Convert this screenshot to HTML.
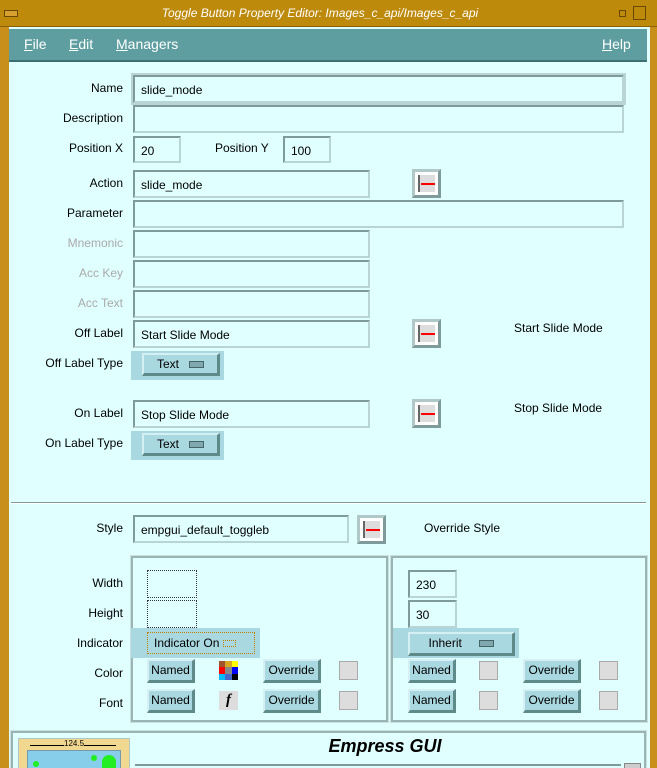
<!DOCTYPE html>
<html style="overflow:hidden;height:768px"><head><style>
body{margin:0;width:657px;height:768px;overflow:hidden;background:#c8901a;font-family:"Liberation Sans",sans-serif;font-size:12px;color:#000;position:relative}
.a{position:absolute}
.in{position:absolute;box-sizing:border-box;border-top:2px solid #7f9a9a;border-left:2px solid #7f9a9a;border-bottom:2px solid #b8d4d4;border-right:2px solid #b8d4d4;background:#e0ffff;padding:6px 0 0 6px;font-size:12px}
.lb{position:absolute;text-align:right;width:120px;left:3px;font-size:12px}
.dim{color:#aaa}
.btn{position:absolute;box-sizing:border-box;background:#a9d8e0;border-top:2px solid #d4f0f4;border-left:2px solid #d4f0f4;border-bottom:3px solid #5f8a8a;border-right:3px solid #5f8a8a;text-align:center;font-size:12px;line-height:18px}
.hl{position:absolute;background:#a9d8e0}
.ic{position:absolute;width:29px;height:29px;box-sizing:border-box;border:3px solid #b0c8c8;border-right-color:#7f9a9a;border-bottom-color:#7f9a9a;background:#fff}
.ic i{position:absolute;left:3px;top:3px;width:17px;height:17px;background:#ddd;border-left:2px solid #666;box-sizing:border-box}
.ic i b{position:absolute;left:1px;top:8px;width:14px;height:2px;background:red}
.gr{position:absolute;width:19px;height:19px;background:#ddd;border:1px solid #aaa;box-sizing:border-box}
.box{position:absolute;box-sizing:border-box;border:2px solid #9ab4b4;outline:1px solid #c8e0e0}
.dot{position:absolute;border:1px dotted #334;box-sizing:border-box}
</style></head><body>
<div class="a" style="left:0;top:0;width:657px;height:26px;background:#bd8a0c;border-bottom:1px solid #8a6000"></div>
<div class="a" style="left:4px;top:10px;width:12px;height:5px;border:1px solid #6a4800;background:#d8a030"></div>
<div class="a" style="left:619px;top:10px;width:5px;height:5px;border:1px solid #6a4800"></div>
<div class="a" style="left:633px;top:6px;width:11px;height:12px;border:1px solid #6a4800"></div>
<div class="a" style="left:20px;top:0;width:600px;text-align:center;color:#fff;font-style:italic;font-size:12px;line-height:27px">Toggle Button Property Editor: Images_c_api/Images_c_api</div>
<div class="a" style="left:9px;top:27px;width:641px;height:741px;background:#e0ffff"></div>
<div class="a" style="left:9px;top:29px;width:638px;height:31px;background:#5f9ea0;border-bottom:2px solid #3d6e70;color:#fff;font-size:14px"></div>
<div class="a" style="left:24px;top:36px;color:#fff;font-size:14px"><u>F</u>ile</div>
<div class="a" style="left:69px;top:36px;color:#fff;font-size:14px"><u>E</u>dit</div>
<div class="a" style="left:116px;top:36px;color:#fff;font-size:14px"><u>M</u>anagers</div>
<div class="a" style="left:602px;top:36px;color:#fff;font-size:14px"><u>H</u>elp</div>

<div class="lb" style="top:81px">Name</div>
<div class="a" style="left:131px;top:73px;width:495px;height:32px;background:#b8d4d4"></div>
<div class="in" style="left:133px;top:75px;width:491px;height:28px">slide_mode</div>
<div class="lb" style="top:111px">Description</div>
<div class="in" style="left:133px;top:105px;width:491px;height:28px"></div>
<div class="lb" style="top:141px">Position X</div>
<div class="in" style="left:133px;top:136px;width:48px;height:27px">20</div>
<div class="a" style="left:215px;top:141px">Position Y</div>
<div class="in" style="left:283px;top:136px;width:48px;height:27px">100</div>
<div class="lb" style="top:176px">Action</div>
<div class="in" style="left:133px;top:170px;width:237px;height:28px">slide_mode</div>
<div class="ic" style="left:412px;top:169px"><i><b></b></i></div>
<div class="lb" style="top:206px">Parameter</div>
<div class="in" style="left:133px;top:200px;width:491px;height:28px"></div>
<div class="lb dim" style="top:236px">Mnemonic</div>
<div class="in" style="left:133px;top:230px;width:237px;height:28px"></div>
<div class="lb dim" style="top:266px">Acc Key</div>
<div class="in" style="left:133px;top:260px;width:237px;height:28px"></div>
<div class="lb dim" style="top:296px">Acc Text</div>
<div class="in" style="left:133px;top:290px;width:237px;height:28px"></div>
<div class="lb" style="top:326px">Off Label</div>
<div class="in" style="left:133px;top:320px;width:237px;height:28px">Start Slide Mode</div>
<div class="ic" style="left:412px;top:319px"><i><b></b></i></div>
<div class="a" style="left:514px;top:321px">Start Slide Mode</div>
<div class="lb" style="top:356px">Off Label Type</div>
<div class="hl" style="left:131px;top:351px;width:93px;height:29px"></div>
<div class="btn" style="left:142px;top:353px;width:78px;height:23px">Text &nbsp;&nbsp;<span style="display:inline-block;width:13px;height:5px;background:#7fa8b0;border:1px solid #466"></span></div>
<div class="lb" style="top:406px">On Label</div>
<div class="in" style="left:133px;top:400px;width:237px;height:28px">Stop Slide Mode</div>
<div class="ic" style="left:412px;top:399px"><i><b></b></i></div>
<div class="a" style="left:514px;top:401px">Stop Slide Mode</div>
<div class="lb" style="top:436px">On Label Type</div>
<div class="hl" style="left:131px;top:431px;width:93px;height:29px"></div>
<div class="btn" style="left:142px;top:433px;width:78px;height:23px">Text &nbsp;&nbsp;<span style="display:inline-block;width:13px;height:5px;background:#7fa8b0;border:1px solid #466"></span></div>

<div class="a" style="left:11px;top:502px;width:635px;height:1px;background:#7f9a9a;border-bottom:1px solid #fff"></div>
<div class="lb" style="top:521px">Style</div>
<div class="in" style="left:133px;top:515px;width:216px;height:28px">empgui_default_toggleb</div>
<div class="ic" style="left:357px;top:515px"><i><b></b></i></div>
<div class="a" style="left:424px;top:521px">Override Style</div>

<div class="box" style="left:131px;top:556px;width:257px;height:166px"></div>
<div class="box" style="left:391px;top:556px;width:256px;height:166px"></div>
<div class="lb" style="top:576px">Width</div>
<div class="dot" style="left:147px;top:570px;width:50px;height:28px"></div>
<div class="lb" style="top:606px">Height</div>
<div class="dot" style="left:147px;top:600px;width:50px;height:28px"></div>
<div class="lb" style="top:636px">Indicator</div>
<div class="hl" style="left:131px;top:628px;width:129px;height:30px"></div>
<div class="a" style="left:147px;top:632px;width:108px;height:22px;border:1px dotted #c08000;box-sizing:border-box;padding:3px 0 0 6px">Indicator On <span style="display:inline-block;width:11px;height:5px;border:1px dotted #c08000"></span></div>
<div class="lb" style="top:666px">Color</div>
<div class="btn" style="left:147px;top:659px;width:48px;height:24px">Named</div>
<div class="a" style="left:219px;top:661px;width:19px;height:19px;display:grid;grid-template-columns:1fr 1fr 1fr">
<i style="background:#a0522d"></i><i style="background:#daa520"></i><i style="background:#ff0"></i><i style="background:red"></i><i style="background:#888"></i><i style="background:#00f"></i><i style="background:#0bf"></i><i style="background:#46c"></i><i style="background:#000"></i></div>
<div class="btn" style="left:263px;top:659px;width:58px;height:24px">Override</div>
<div class="gr" style="left:339px;top:661px"></div>
<div class="lb" style="top:696px">Font</div>
<div class="btn" style="left:147px;top:689px;width:48px;height:24px">Named</div>
<div class="a" style="left:219px;top:691px;width:19px;height:19px;background:#ddd;font-family:'Liberation Serif',serif;font-style:italic;font-weight:bold;font-size:15px;text-align:center;line-height:19px">f</div>
<div class="btn" style="left:263px;top:689px;width:58px;height:24px">Override</div>
<div class="gr" style="left:339px;top:691px"></div>

<div class="in" style="left:408px;top:570px;width:49px;height:28px">230</div>
<div class="in" style="left:408px;top:600px;width:49px;height:28px">30</div>
<div class="hl" style="left:393px;top:628px;width:126px;height:30px"></div>
<div class="btn" style="left:408px;top:632px;width:107px;height:24px">Inherit &nbsp;&nbsp;&nbsp;&nbsp;<span style="display:inline-block;width:13px;height:5px;background:#7fa8b0;border:1px solid #466"></span></div>
<div class="btn" style="left:408px;top:659px;width:48px;height:24px">Named</div>
<div class="gr" style="left:479px;top:661px"></div>
<div class="btn" style="left:523px;top:659px;width:58px;height:24px">Override</div>
<div class="gr" style="left:599px;top:661px"></div>
<div class="btn" style="left:408px;top:689px;width:48px;height:24px">Named</div>
<div class="gr" style="left:479px;top:691px"></div>
<div class="btn" style="left:523px;top:689px;width:58px;height:24px">Override</div>
<div class="gr" style="left:599px;top:691px"></div>

<div class="box" style="left:11px;top:731px;width:635px;height:40px"></div>
<div class="a" style="left:18px;top:738px;width:110px;height:30px;background:#f0d890;border:1px solid #b0c8c8"></div>
<div class="a" style="left:27px;top:750px;width:92px;height:18px;background:#87ceeb;border:1px solid #79a;border-bottom:0"></div>
<div class="a" style="left:30px;top:745px;width:86px;height:1px;background:#000"></div>
<div class="a" style="left:64px;top:739px;font-size:8px;background:#f0d890">124.5</div>
<div class="a" style="left:102px;top:755px;width:14px;height:13px;border-radius:7px 7px 0 0;background:#2e2"></div>
<div class="a" style="left:91px;top:755px;width:6px;height:6px;border-radius:50%;background:#2e2"></div>
<div class="a" style="left:33px;top:761px;width:6px;height:6px;border-radius:50%;background:#2e2"></div>
<div class="a" style="left:135px;top:736px;width:500px;text-align:center;font-size:18px;font-weight:bold;font-style:italic">Empress GUI</div>
<div class="a" style="left:135px;top:764px;width:486px;height:4px;border-top:2px solid #7f9a9a"></div>
<div class="a" style="left:624px;top:763px;width:15px;height:5px;background:#ccc;border:1px solid #888"></div>
</body></html>
